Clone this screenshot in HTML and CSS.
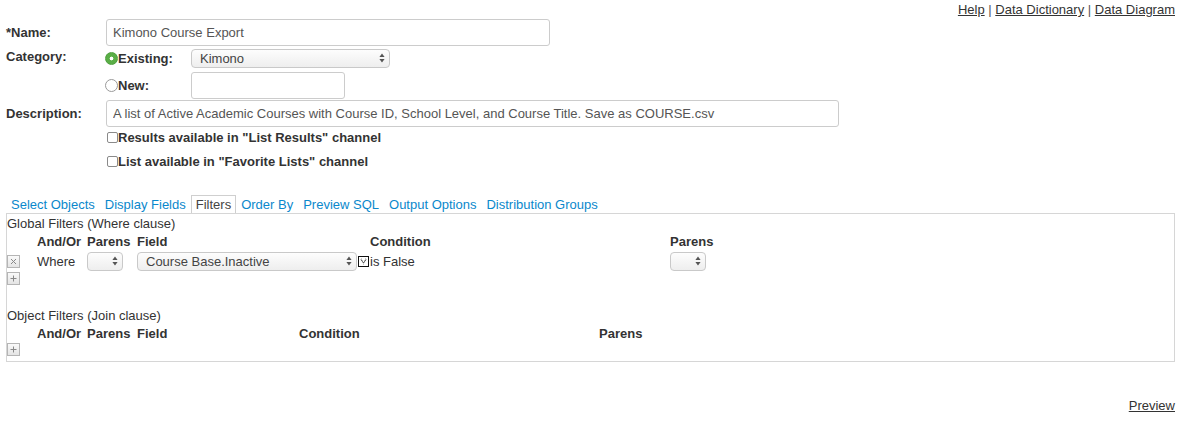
FILE: index.html
```html
<!DOCTYPE html>
<html>
<head>
<meta charset="utf-8">
<title>List Edit</title>
<link rel="stylesheet" href="styles.css">
</head>
<body>
<div class="page">
  <div class="toplinks">
    <a href="#">Help</a> <span class="sep">|</span> <a href="#">Data Dictionary</a> <span class="sep">|</span> <a href="#">Data Diagram</a>
  </div>

  <div class="form">
    <label class="lbl lbl-name">*Name:</label>
    <div class="field f-name"><input class="text text-name" type="text" value="Kimono Course Export"></div>

    <label class="lbl lbl-cat">Category:</label>
    <div class="field f-cat">
      <span class="radio-wrap"><input type="radio" name="cat" class="radio" checked><b>Existing:</b></span>
      <span class="sel sel-cat"><select><option>Kimono</option></select><svg class="arr" width="6" height="10" viewBox="0 0 6 10"><path d="M3 0.5 L5.6 4 L0.4 4 Z M3 9.5 L5.6 6 L0.4 6 Z" fill="#555"/></svg></span>
    </div>

    <div class="field f-new">
      <span class="radio-wrap"><input type="radio" name="cat" class="radio"><b>New:</b></span>
      <input class="text text-new" type="text" value="">
    </div>

    <label class="lbl lbl-desc">Description:</label>
    <div class="field f-desc"><input class="text text-desc" type="text" value="A list of Active Academic Courses with Course ID, School Level, and Course Title. Save as COURSE.csv"></div>

    <div class="field check-row check-1"><input type="checkbox" class="check"><b>Results available in "List Results" channel</b></div>
    <div class="field check-row check-2"><input type="checkbox" class="check"><b>List available in "Favorite Lists" channel</b></div>
  </div>

  <ul class="tabs">
    <li class="tab"><a href="#">Select Objects</a></li>
    <li class="tab"><a href="#">Display Fields</a></li>
    <li class="tab active"><span>Filters</span></li>
    <li class="tab"><a href="#">Order By</a></li>
    <li class="tab"><a href="#">Preview SQL</a></li>
    <li class="tab"><a href="#">Output Options</a></li>
    <li class="tab"><a href="#">Distribution Groups</a></li>
  </ul>

  <div class="panel">
    <div class="section-title first-title">Global Filters (Where clause)</div>
    <div class="fgrid fgrid-global">
      <div class="hd"></div>
      <div class="hd">And/Or</div>
      <div class="hd">Parens</div>
      <div class="hd">Field</div>
      <div class="hd">Condition</div>
      <div class="hd">Parens</div>

      <div class="cell"><span class="btn"><svg width="13" height="13" viewBox="0 0 13 13"><path d="M4 4 L9 9 M9 4 L4 9" stroke="#888" stroke-width="1"/></svg></span></div>
      <div class="cell">Where</div>
      <div class="cell"><span class="sel sel-paren"><select><option></option></select><svg class="arr" width="6" height="10" viewBox="0 0 6 10"><path d="M3 0.5 L5.6 4 L0.4 4 Z M3 9.5 L5.6 6 L0.4 6 Z" fill="#555"/></svg></span></div>
      <div class="cell"><span class="sel sel-field"><select><option>Course Base.Inactive</option></select><svg class="arr" width="6" height="10" viewBox="0 0 6 10"><path d="M3 0.5 L5.6 4 L0.4 4 Z M3 9.5 L5.6 6 L0.4 6 Z" fill="#555"/></svg></span><svg class="ficon" width="11" height="11" viewBox="0 0 11 11"><rect x="0.5" y="0.5" width="10" height="10" fill="#fff" stroke="#111"/><path d="M3 3.5 L5.5 7 L8 3.5" fill="none" stroke="#444" stroke-width="1"/><path d="M3 3 h1 M7 3 h1 M4 5 h1 M6 5 h1 M5 8 h1" stroke="#999" stroke-width="1"/></svg></div>
      <div class="cell">is False</div>
      <div class="cell"><span class="sel sel-paren"><select><option></option></select><svg class="arr" width="6" height="10" viewBox="0 0 6 10"><path d="M3 0.5 L5.6 4 L0.4 4 Z M3 9.5 L5.6 6 L0.4 6 Z" fill="#555"/></svg></span></div>
    </div>
    <div class="add-row"><span class="btn"><svg width="13" height="13" viewBox="0 0 13 13"><path d="M3.5 6.5 H9.5 M6.5 3.5 V9.5" stroke="#888" stroke-width="1"/></svg></span></div>

    <div class="section-title obj-title">Object Filters (Join clause)</div>
    <div class="fgrid fgrid-object">
      <div class="hd"></div>
      <div class="hd">And/Or</div>
      <div class="hd">Parens</div>
      <div class="hd">Field</div>
      <div class="hd">Condition</div>
      <div class="hd">Parens</div>
    </div>
    <div class="add-row add-last"><span class="btn"><svg width="13" height="13" viewBox="0 0 13 13"><path d="M3.5 6.5 H9.5 M6.5 3.5 V9.5" stroke="#888" stroke-width="1"/></svg></span></div>
  </div>

  <div class="bottomlinks"><a href="#">Preview</a></div>
</div>
</body>
</html>
```

FILE: styles.css
```css
* { box-sizing: border-box; }

body {
  margin: 0;
  font-family: "Liberation Sans", Arial, sans-serif;
  font-size: 13px;
  color: #333;
  background: #fff;
}

.page {
  padding: 0 16px 0 6px;
}

.toplinks {
  text-align: right;
  padding-top: 1px;
  line-height: 17px;
  height: 19px;
}
.toplinks a,
.bottomlinks a {
  color: #333;
  text-decoration: underline;
}
.toplinks .sep { color: #555; }

/* form */
.form {
  display: grid;
  grid-template-columns: 100px 1fr;
  grid-template-rows: 27px 22px 31px 28px 20px 28px;
}
.lbl {
  font-weight: bold;
  grid-column: 1;
  align-self: center;
}
.lbl-name { grid-row: 1; }
.lbl-cat { grid-row: 2 / span 2; align-self: start; line-height: 15px; margin-top: 3px; }
.lbl-desc { grid-row: 4; align-self: end; line-height: 27px; }

.field { grid-column: 2; display: flex; align-items: center; }
.f-name { grid-row: 1; }
.f-cat { grid-row: 2; align-self: end; height: 19px; }
.f-new { grid-row: 3; align-self: end; height: 27px; }
.f-desc { grid-row: 4; align-self: end; }
.check-1 { grid-row: 5; height: 20px; }
.check-2 { grid-row: 6; align-self: start; margin-top: 4px; height: 20px; }

.text {
  height: 27px;
  border: 1px solid #ccc;
  border-radius: 3px;
  padding: 0 6px;
  font-family: "Liberation Sans", Arial, sans-serif;
  font-size: 13px;
  color: #555;
  background: #fff;
  outline: none;
}
.text-name { width: 444px; }
.text-new { width: 154px; }
.text-desc { width: 733px; }

.radio-wrap {
  display: inline-flex;
  align-items: center;
  width: 85px;
}
.radio {
  appearance: none;
  -webkit-appearance: none;
  width: 13px;
  height: 13px;
  margin: 0 0 0 -1px;
  border-radius: 50%;
  border: 1px solid #9a9a9a;
  background: #fff;
  flex: none;
}
.radio:checked {
  border-color: #4e9f3d;
  background: radial-gradient(circle, #fff 0 1.6px, #5aae46 2.2px);
}

.check-row b { white-space: nowrap; }
.check {
  appearance: none;
  -webkit-appearance: none;
  width: 11px;
  height: 11px;
  margin: 0 0 0 1px;
  border: 1px solid #8a8a8a;
  border-radius: 2px;
  background: #fff;
  flex: none;
}

/* custom selects */
.sel {
  position: relative;
  display: inline-block;
  height: 19px;
}
.sel select {
  appearance: none;
  -webkit-appearance: none;
  width: 100%;
  height: 19px;
  border: 1px solid #c9c9c9;
  border-radius: 4px;
  background: linear-gradient(#fdfdfd, #eeeeee);
  font-family: "Liberation Sans", Arial, sans-serif;
  font-size: 13px;
  color: #444;
  padding: 0 0 0 8px;
  margin: 0;
  outline: none;
}
.sel .arr {
  position: absolute;
  right: 5px;
  top: 4px;
  pointer-events: none;
}
.sel-cat { width: 199px; }
.sel-paren { width: 36px; }
.sel-field { width: 220px; }

/* tabs */
.tabs {
  list-style: none;
  margin: 20px 0 0 0;
  padding: 0;
  display: flex;
}
.tab {
  padding: 0 4px;
  border: 1px solid transparent;
  border-bottom: none;
  height: 18px;
  line-height: 17px;
}
.tab a { color: #0a88cc; text-decoration: none; }
.tab.active {
  border-color: #cfcfcf;
  color: #444;
}

/* panel */
.panel {
  border: 1px solid #d6d6d6;
  height: 149px;
}
.section-title {
  line-height: 18px;
  height: 18px;
  color: #333;
}
.first-title { margin-top: 1px; }
.obj-title { margin-top: 21px; }

.fgrid {
  display: grid;
  align-items: center;
}
.fgrid-global { grid-template-columns: 30px 50px 50px 233px 300px 1fr; grid-template-rows: 18px 21px; }
.fgrid-object { grid-template-columns: 30px 50px 50px 162px 300px 1fr; grid-template-rows: 18px; }
.hd { font-weight: bold; line-height: 18px; }
.cell { display: flex; align-items: center; height: 21px; }
.ficon { margin-left: 1px; flex: none; }

.btn {
  display: inline-block;
  width: 13px;
  height: 13px;
  border: 1px solid #b5b5b5;
  background: linear-gradient(#fafafa, #e4e4e4);
  line-height: 0;
}
.btn svg { margin: -1px 0 0 -1px; }
.add-row { height: 14px; }

.bottomlinks {
  text-align: right;
  margin-top: 35px;
  line-height: 18px;
}
```
